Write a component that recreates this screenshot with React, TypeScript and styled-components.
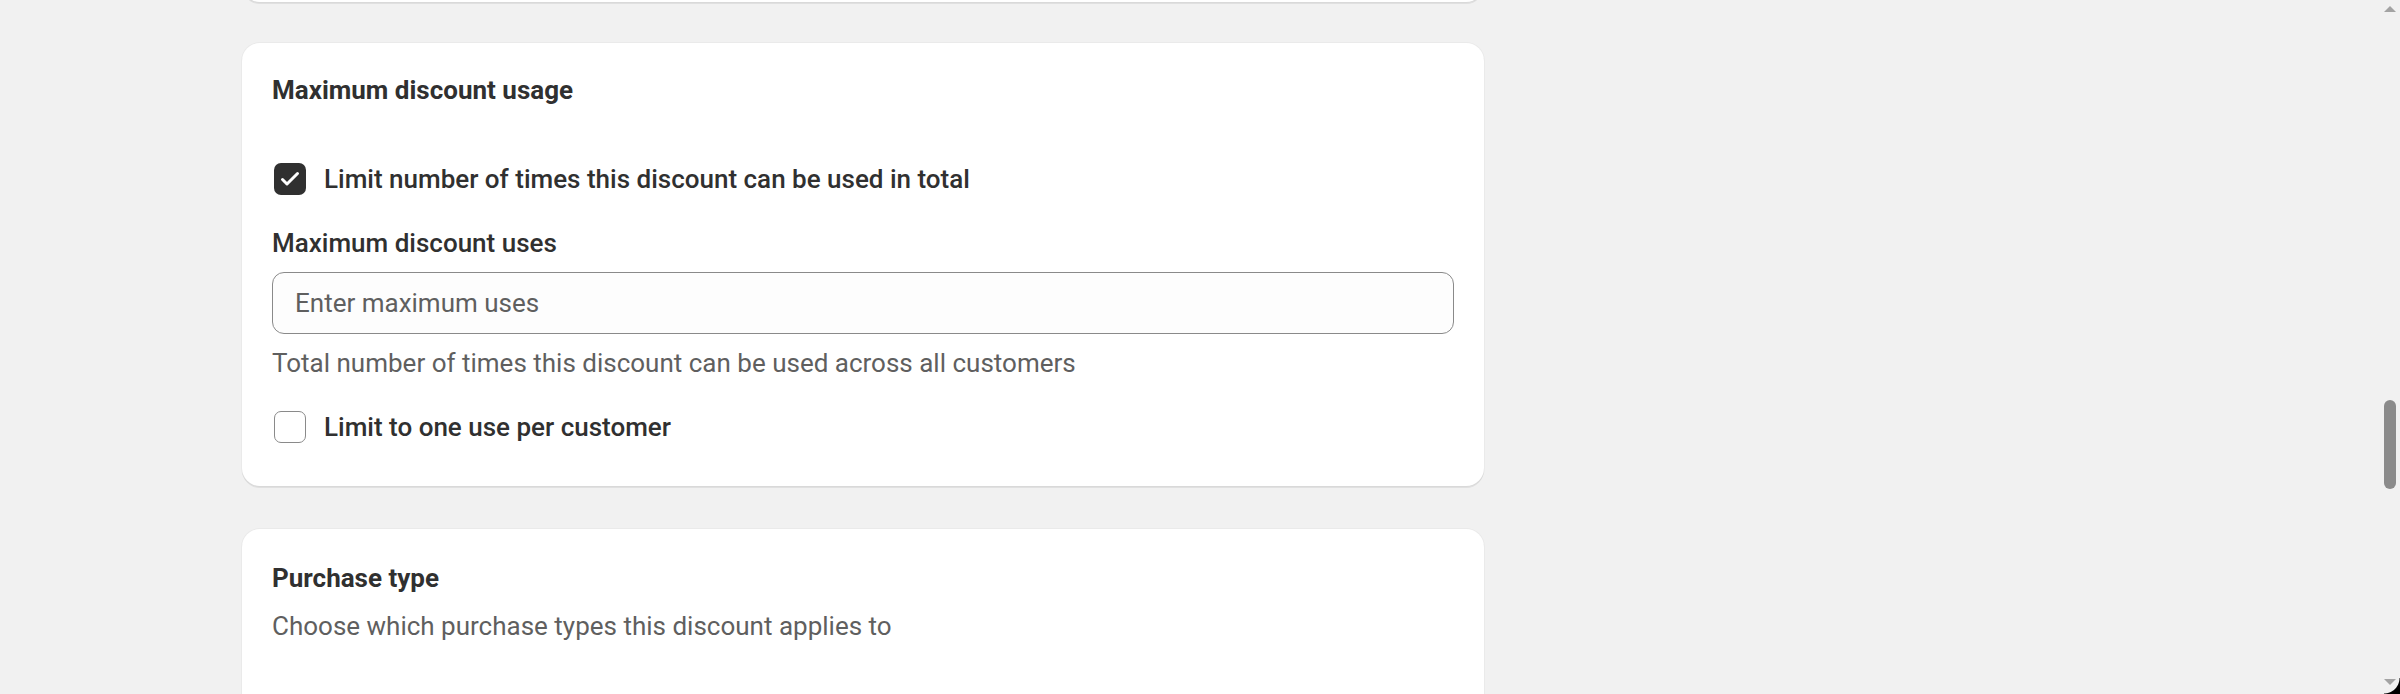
import React from 'react';
import styled, { createGlobalStyle } from 'styled-components';

const GlobalStyle = createGlobalStyle`
  html, body {
    margin: 0;
    padding: 0;
    height: 100%;
    overflow: hidden;
    background: #f1f1f1;
    font-family: Roboto, 'Noto Sans', 'Liberation Sans', sans-serif;
    color: #303030;
  }
`;

const CheckIcon: React.FC = () => (
  <svg width="32" height="32" viewBox="0 0 32 32" fill="none">
    <path
      d="M8.5 16.5 L13 21 L23.5 10.5"
      stroke="#fff"
      strokeWidth="3"
      strokeLinecap="round"
      strokeLinejoin="round"
    />
  </svg>
);

const Checkbox: React.FC<{ checked?: boolean; label: string }> = ({ checked, label }) => (
  <ChoiceRow>
    <Box $checked={checked}>{checked && <CheckIcon />}</Box>
    <ChoiceLabel>{label}</ChoiceLabel>
  </ChoiceRow>
);

const App: React.FC = () => {
  return (
    <>
      <GlobalStyle />
      <Page>
        <Column>
          <CardTail />
          <Card $top={30} $bottom={42}>
            <Heading>Maximum discount usage</Heading>
            <UsageBody>
              <Checkbox checked label="Limit number of times this discount can be used in total" />
              <Field>
                <FieldLabel>Maximum discount uses</FieldLabel>
                <Input placeholder="Enter maximum uses" />
                <HelpText>Total number of times this discount can be used across all customers</HelpText>
              </Field>
              <Checkbox label="Limit to one use per customer" />
            </UsageBody>
          </Card>
          <Card $top={32} $bottom={200}>
            <Heading>Purchase type</Heading>
            <Subdued>Choose which purchase types this discount applies to</Subdued>
          </Card>
        </Column>
      </Page>
      <Scrollbar>
        <ArrowUp />
        <Thumb />
        <ArrowDown />
      </Scrollbar>
      <WindowCorner />
    </>
  );
};

export default App;

// Styled Components
const Page = styled.div`
  height: 694px;
  overflow: hidden;
  padding-left: 242px;
`;

const Column = styled.div`
  width: 1242px;
  display: flex;
  flex-direction: column;
  gap: 43px;
`;

const cardShadow = `
  box-shadow: 0 2px 0 0 rgba(26, 26, 26, 0.08), 0 0 0 1px rgba(26, 26, 26, 0.03);
`;

const CardTail = styled.div`
  height: 40px;
  margin-top: -38px;
  margin-bottom: -2px;
  background: #fff;
  border-radius: 18px;
  ${cardShadow}
`;

const Card = styled.section<{ $top: number; $bottom: number }>`
  background: #fff;
  border-radius: 18px;
  padding: ${(p) => p.$top}px 30px ${(p) => p.$bottom}px;
  ${cardShadow}
`;

const Heading = styled.h2`
  margin: 0;
  font-size: 26px;
  line-height: 34px;
  font-weight: 700;
  color: #303030;
`;

const UsageBody = styled.div`
  margin-top: 55px;
  display: flex;
  flex-direction: column;
  gap: 30px;
`;

const ChoiceRow = styled.label`
  display: flex;
  align-items: center;
  gap: 18px;
  height: 34px;
  padding-left: 2px;
`;

const Box = styled.span<{ $checked?: boolean }>`
  width: 32px;
  height: 32px;
  box-sizing: border-box;
  border-radius: 7px;
  flex-shrink: 0;
  display: flex;
  background: ${(p) => (p.$checked ? '#303030' : '#fff')};
  border: ${(p) => (p.$checked ? 'none' : '1.5px solid #8a8a8a')};
`;

const ChoiceLabel = styled.span`
  font-size: 26px;
  line-height: 34px;
  font-weight: 500;
  color: #303030;
`;

const Field = styled.div`
  display: flex;
  flex-direction: column;
  gap: 12px;
`;

const FieldLabel = styled.div`
  font-size: 26px;
  line-height: 34px;
  font-weight: 500;
  color: #303030;
`;

const Input = styled.input`
  box-sizing: border-box;
  width: 100%;
  height: 62px;
  padding: 0 22px;
  border: 1.5px solid #8a8a8a;
  border-radius: 12px;
  background: #fdfdfd;
  font-family: Roboto, 'Noto Sans', sans-serif;
  font-size: 26px;
  color: #303030;
  outline: none;

  &::placeholder {
    color: #5f5f5f;
    opacity: 1;
  }
`;

const HelpText = styled.div`
  font-size: 26px;
  line-height: 34px;
  color: #5f5f5f;
`;

const Subdued = styled.p`
  margin: 14px 0 0;
  font-size: 26px;
  line-height: 34px;
  color: #5f5f5f;
`;

const Scrollbar = styled.div`
  position: fixed;
  top: 0;
  right: 0;
  width: 18px;
  height: 694px;
  background: #f1f1f1;
`;

const Thumb = styled.div`
  position: absolute;
  left: 2px;
  top: 400px;
  width: 12px;
  height: 89px;
  border-radius: 6px;
  background: #8b8b8b;
`;

const ArrowUp = styled.div`
  position: absolute;
  left: 2px;
  top: 6px;
  width: 0;
  height: 0;
  border-left: 6px solid transparent;
  border-right: 6px solid transparent;
  border-bottom: 6px solid #a3a3a3;
`;

const ArrowDown = styled.div`
  position: absolute;
  left: 2px;
  top: 679px;
  width: 0;
  height: 0;
  border-left: 6px solid transparent;
  border-right: 6px solid transparent;
  border-top: 6px solid #a3a3a3;
`;

const WindowCorner = styled.div`
  position: fixed;
  right: 0;
  bottom: 0;
  width: 16px;
  height: 16px;
  background: radial-gradient(circle at 0 0, transparent 15px, #000 16px);
`;
